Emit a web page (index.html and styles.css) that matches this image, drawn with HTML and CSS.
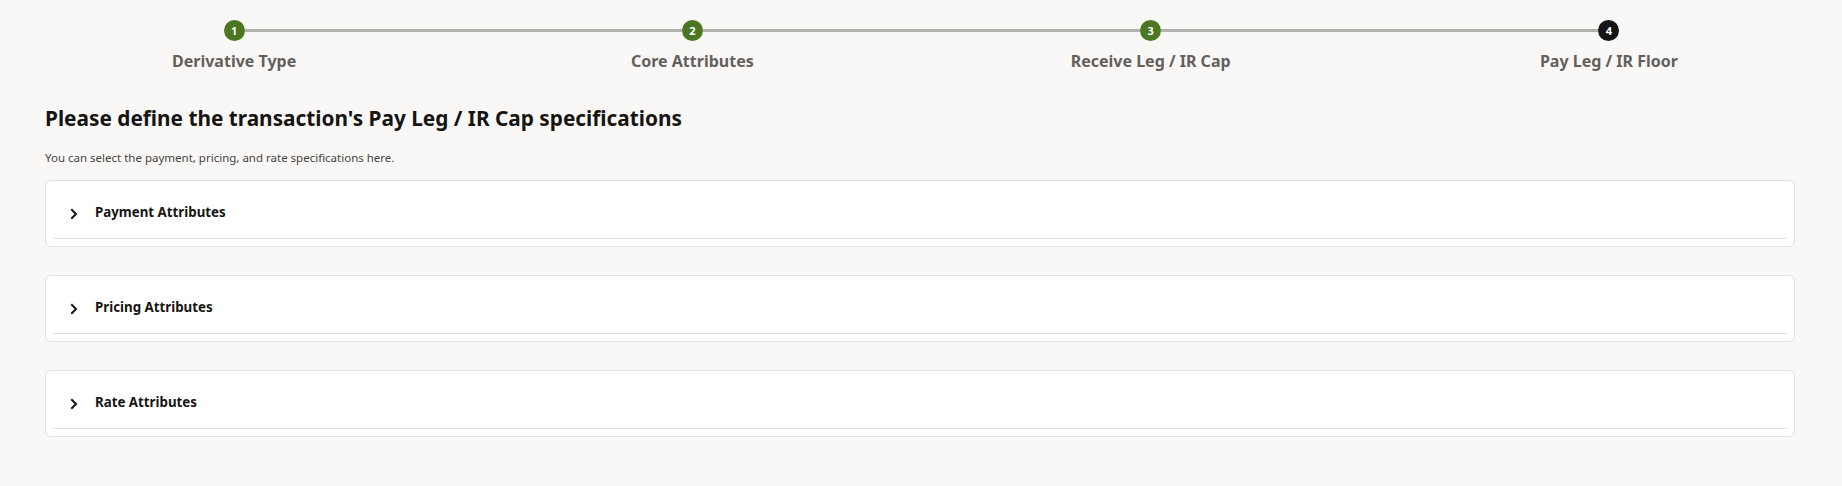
FILE: index.html
```html
<!DOCTYPE html>
<html lang="en">
<head>
<meta charset="utf-8">
<title>Pay Leg / IR Floor</title>
<link rel="stylesheet" href="styles.css">
</head>
<body>
<div class="train">
  <div class="step done first">
    <div class="track"><span class="dot">1</span></div>
    <div class="step-label">Derivative Type</div>
  </div>
  <div class="step done">
    <div class="track"><span class="dot">2</span></div>
    <div class="step-label">Core Attributes</div>
  </div>
  <div class="step done">
    <div class="track"><span class="dot">3</span></div>
    <div class="step-label">Receive Leg / IR Cap</div>
  </div>
  <div class="step current last">
    <div class="track"><span class="dot">4</span></div>
    <div class="step-label">Pay Leg / IR Floor</div>
  </div>
</div>

<main class="content">
  <h1 class="title">Please define the transaction's Pay Leg / IR Cap specifications</h1>
  <p class="subtitle">You can select the payment, pricing, and rate specifications here.</p>

  <section class="panel">
    <div class="panel-header">
      <svg class="chev" width="16" height="16" viewBox="0 0 16 16"><path d="M6 4 L10 8 L6 12" fill="none" stroke="#161513" stroke-width="2" stroke-linecap="square" stroke-linejoin="miter"/></svg>
      <span class="panel-title">Payment Attributes</span>
    </div>
  </section>

  <section class="panel">
    <div class="panel-header">
      <svg class="chev" width="16" height="16" viewBox="0 0 16 16"><path d="M6 4 L10 8 L6 12" fill="none" stroke="#161513" stroke-width="2" stroke-linecap="square" stroke-linejoin="miter"/></svg>
      <span class="panel-title">Pricing Attributes</span>
    </div>
  </section>

  <section class="panel">
    <div class="panel-header">
      <svg class="chev" width="16" height="16" viewBox="0 0 16 16"><path d="M6 4 L10 8 L6 12" fill="none" stroke="#161513" stroke-width="2" stroke-linecap="square" stroke-linejoin="miter"/></svg>
      <span class="panel-title">Rate Attributes</span>
    </div>
  </section>
</main>
</body>
</html>
```
FILE: styles.css
```css
html, body {
  margin: 0;
  padding: 0;
  background: #f9f8f6;
  font-family: "Noto Sans", "Open Sans", sans-serif;
  color: #161513;
}

/* ---------- train / stepper ---------- */
.train {
  display: flex;
  padding: 20px 4px 0 5px;
}
.step {
  flex: 1 1 0;
  display: flex;
  flex-direction: column;
  align-items: center;
}
.track {
  width: 100%;
  display: flex;
  align-items: center;
  height: 21px;
}
.track::before,
.track::after {
  content: "";
  flex: 1 1 0;
  height: 3px;
  background: #b2b1ae;
}
.first .track::before,
.last .track::after {
  background: transparent;
}
.dot {
  flex: 0 0 auto;
  width: 21px;
  height: 21px;
  border-radius: 50%;
  background: #4b7622;
  color: #ffffff;
  font-size: 11px;
  font-weight: 700;
  line-height: 21px;
  text-align: center;
}
.current .dot {
  background: #161513;
}
.step-label {
  margin-top: 9px;
  font-size: 16px;
  line-height: 22px;
  font-weight: 700;
  color: #655f5b;
  white-space: nowrap;
}

/* ---------- content ---------- */
.content {
  padding: 0 47px 40px 45px;
}
.title {
  margin: 32px 0 0 0;
  font-size: 20.8px;
  line-height: 28px;
  font-weight: 700;
  color: #161513;
}
.subtitle {
  margin: 18px 0 0 0;
  font-size: 11.5px;
  line-height: 16px;
  color: #46433f;
}

.panel {
  margin-top: 28px;
  background: #ffffff;
  border: 1px solid #e2e0dd;
  border-radius: 6px;
  padding: 0 7px 7px 7px;
}
.subtitle + .panel {
  margin-top: 14px;
}
.panel-header {
  display: flex;
  align-items: center;
  height: 58px;
  padding-left: 13px;
  padding-top: 5px;
  border-bottom: 1px solid #e2e0dd;
  box-sizing: border-box;
}
.chev {
  flex: 0 0 auto;
  margin-top: 4px;
}
.panel-title {
  margin-left: 13px;
  font-size: 13.3px;
  line-height: 20px;
  font-weight: 700;
  color: #161513;
}
```
